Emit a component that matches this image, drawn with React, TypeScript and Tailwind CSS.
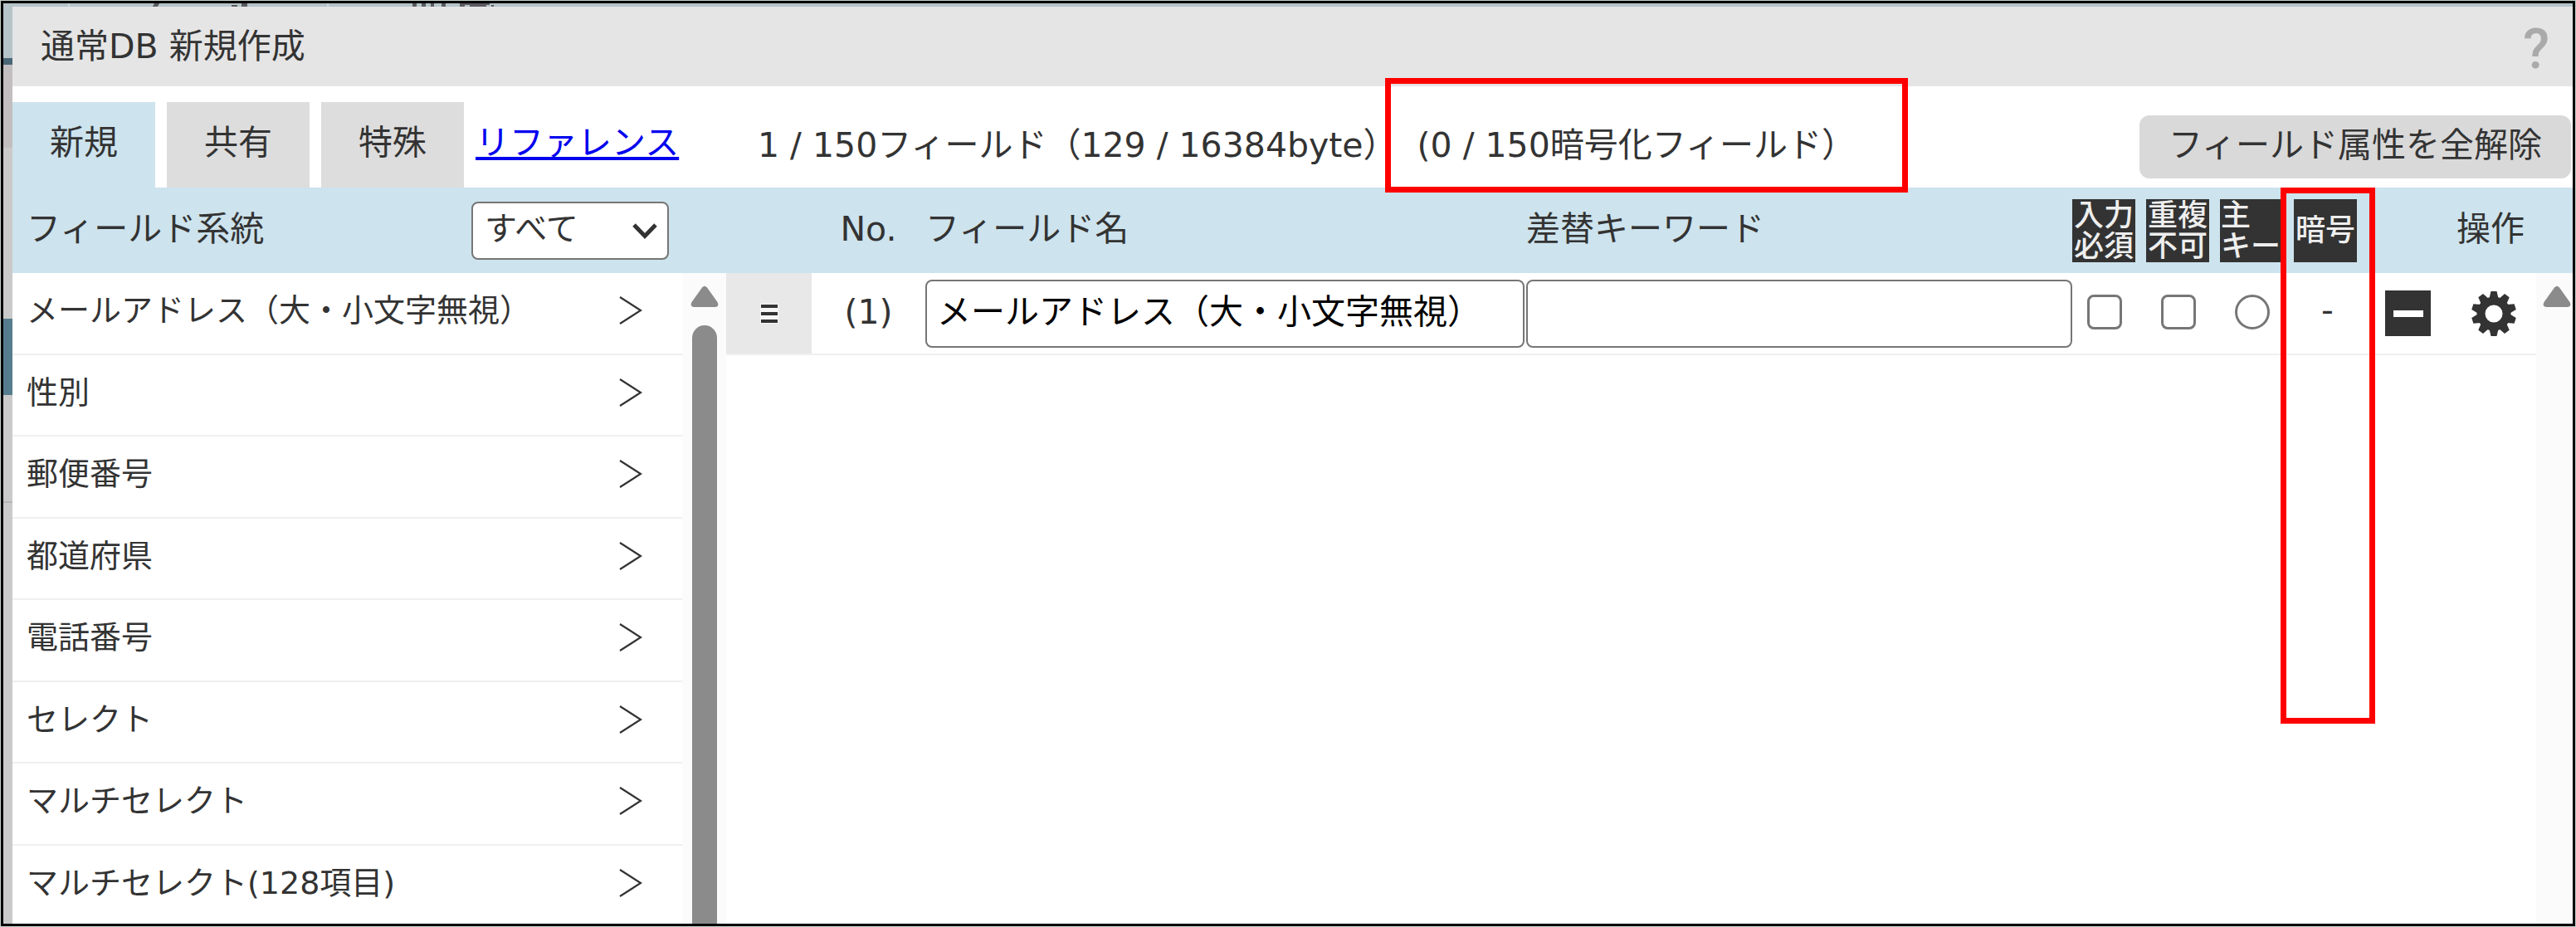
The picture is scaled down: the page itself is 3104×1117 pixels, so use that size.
import { ReactNode } from 'react'
import { clsx } from 'clsx'

interface FieldRow {
  no: number
  name: string
  keyword: string
}

const tabs = ['新規', '共有', '特殊']

const fieldTypes = [
  'メールアドレス（大・小文字無視）',
  '性別',
  '郵便番号',
  '都道府県',
  '電話番号',
  'セレクト',
  'マルチセレクト',
  'マルチセレクト(128項目)',
]

const rows: FieldRow[] = [{ no: 1, name: 'メールアドレス（大・小文字無視）', keyword: '' }]

function ChevronRight() {
  return (
    <svg viewBox="0 0 28 34" className="h-[34px] w-7" fill="none" stroke="#333" strokeWidth="2.2" aria-hidden="true">
      <path d="M1 1 26 17 1 33" />
    </svg>
  )
}

function ArrowUp() {
  return (
    <svg viewBox="0 0 34 26" className="h-[26px] w-[34px] shrink-0" fill="#8b8b8b" aria-hidden="true">
      <path d="M14 2.5Q17-1 20 2.5L32.5 20Q35 25.5 30 26H4Q-1 25.5 1.500 20Z" />
    </svg>
  )
}

function Gear() {
  const teeth = [0, 36, 72, 108, 144, 180, 216, 252, 288, 324]
  return (
    <svg viewBox="0 0 56 56" className="size-14" aria-hidden="true">
      <circle cx="28" cy="28" r="15.500" fill="none" stroke="#333" strokeWidth="10" />
      {teeth.map((deg) => (
        <path key={deg} d="M22.500 9.500 24.500 1H31.500L33.500 9.500Z" fill="#333" transform={`rotate(${deg} 28 28)`} />
      ))}
    </svg>
  )
}

function Badge({ children, left = false }: { children: ReactNode; left?: boolean }) {
  return (
    <span
      className={clsx(
        'flex size-[76px] flex-col justify-center bg-[#333] px-px text-[36px] leading-[37px] font-medium text-[#eee]',
        left ? 'items-start' : 'items-center'
      )}
    >
      {children}
    </span>
  )
}

// Sliver of the page that stays visible behind the dialog
function Backdrop() {
  return (
    <div className="flex w-[11px] shrink-0 flex-col bg-[#cacaca]" aria-hidden="true">
      <div className="h-[62px] bg-[#b5c4c9]" />
      <div className="h-2 bg-[#4a6675]" />
      <div className="h-[100px] bg-[#c2bec0]" />
      <div className="h-[206px]" />
      <div className="h-[92px] bg-[#567d8e]" />
      <div className="h-[130px] border-b-2 border-[#b5b5b5]" />
    </div>
  )
}

function Sidebar() {
  return (
    <aside className="flex w-[860px] shrink-0 flex-col">
      <div className="flex h-[103px] shrink-0 items-center justify-between bg-[#cde3ed] pr-[69px] pl-[17px]">
        <label htmlFor="family" className="pb-1">フィールド系統</label>
        <div className="relative">
          <select
            id="family"
            className="block h-[70px] w-[238px] appearance-none rounded-lg border-2 border-[#767676] bg-white pb-1 pl-3.5 text-[39px] leading-[60px]"
          >
            <option>すべて</option>
          </select>
          <svg
            viewBox="0 0 30 20"
            className="pointer-events-none absolute top-[26px] right-3.5 h-5 w-[30px]"
            fill="none"
            stroke="#333"
            strokeWidth="5"
            aria-hidden="true"
          >
            <path d="M2 2 15 15.500 28 2" />
          </svg>
        </div>
      </div>

      <div className="flex min-h-0 flex-1 overflow-hidden">
        <ul className="grid h-[788px] flex-1 auto-rows-fr text-[38px]">
          {fieldTypes.map((type) => (
            <li key={type} className="border-b-2 border-[#efefef]">
              <button type="button" className="flex h-full w-full items-center justify-between pr-12 pb-1.5 pl-[17px] text-left">
                {type}
                <ChevronRight />
              </button>
            </li>
          ))}
        </ul>
        <div className="flex w-[53px] flex-col items-center gap-[22px] bg-[#fbfbfb] pt-[15px]">
          <ArrowUp />
          <div className="w-[30px] flex-1 rounded-t-full bg-[#8b8b8b]" />
        </div>
      </div>
    </aside>
  )
}

function FieldTable() {
  return (
    <table className="w-full table-fixed border-collapse">
      <thead>
        <tr className="h-[103px] bg-[#cde3ed] text-left">
          <th className="w-[103px]" />
          <th className="w-[137px] pb-1 text-center font-normal">No.</th>
          <th className="w-[724px] pb-1 font-normal">フィールド名</th>
          <th className="pb-1 font-normal">差替キーワード</th>
          <th className="w-[89px]">
            <Badge><span>入力</span><span>必須</span></Badge>
          </th>
          <th className="w-[89px]">
            <Badge><span>重複</span><span>不可</span></Badge>
          </th>
          <th className="w-[89px]">
            <Badge left><span>主</span><span>キー</span></Badge>
          </th>
          <th className="w-[89px]">
            <Badge>暗号</Badge>
          </th>
          <th className="w-[203px] pr-3.5 pb-1 text-right font-normal">操作</th>
        </tr>
      </thead>
      <tbody>
        {rows.map((row) => (
          <tr key={row.no} className="h-[98px] border-b-2 border-[#efefef]">
            <td className="bg-[#e8e8e8]">
              <svg viewBox="0 0 22 24" className="mx-auto h-6 w-[22px]" aria-hidden="true">
                <path d="M0 0h22v24H0z" fill="#f6f6f6" />
                <path d="M1 1h20v4H1zM1 10h20v4H1zM1 19h20v4H1z" fill="#333" />
              </svg>
            </td>
            <td className="pb-1 text-center">({row.no})</td>
            <td>
              <input
                type="text"
                aria-label="フィールド名"
                defaultValue={row.name}
                className="block h-[82px] w-[722px] rounded-lg border-2 border-[#767676] bg-white px-3 pb-3 text-black"
              />
            </td>
            <td>
              <input
                type="text"
                aria-label="差替キーワード"
                defaultValue={row.keyword}
                className="block h-[82px] w-full rounded-lg border-2 border-[#767676] bg-white px-3 pb-3 text-black"
              />
            </td>
            <td className="pr-3 pb-1">
              <input type="checkbox" aria-label="入力必須" className="mx-auto block size-[42px] appearance-none rounded-lg border-[3px] border-[#767676]" />
            </td>
            <td className="pr-3 pb-1">
              <input type="checkbox" aria-label="重複不可" className="mx-auto block size-[42px] appearance-none rounded-lg border-[3px] border-[#767676]" />
            </td>
            <td className="pr-3 pb-1">
              <input type="radio" name="primary" aria-label="主キー" className="mx-auto block size-[42px] appearance-none rounded-full border-[3px] border-[#767676]" />
            </td>
            <td className="pr-2 pb-2 text-center">-</td>
            <td className="pl-[21px]">
              <div className="flex items-center gap-12">
                <button type="button" aria-label="削除" className="flex size-[55px] items-center justify-center bg-[#333]">
                  <span className="h-2 w-9 bg-white" />
                </button>
                <button type="button" aria-label="設定">
                  <Gear />
                </button>
              </div>
            </td>
          </tr>
        ))}
      </tbody>
    </table>
  )
}

export default function App() {
  return (
    <div className="h-screen bg-[#c5d0cb] p-px font-['DejaVu_Sans','Noto_Sans_CJK_JP',sans-serif] text-[41px] leading-[60px] text-[#333]">
      <div className="flex h-full flex-col overflow-hidden border-[3px] border-black bg-white">
        <svg className="h-1 w-full shrink-0 bg-[#b5c4c9]" aria-hidden="true">
          <path d="M79 0v4M391 0v4" stroke="#ccd6da" strokeWidth="2" />
          <path d="M180 4l2-4h6l-2 4zM275 2h7v2h-7zM287 0h7v4h-7zM493 0h5v4h-5zM504 0h5v4h-5zM515 0h4v4h-4zM528 0h5v4h-5zM550 0h6v4h-6zM556 0h30v2h-30zM562 2h20v2h-20zM588 2h3v2h-3z" fill="#5a5a60" />
        </svg>
        <div className="flex min-h-0 flex-1">
          <Backdrop />
          <div className="relative flex min-w-0 flex-1 flex-col">
            <header className="flex h-24 shrink-0 items-center justify-between bg-[#e5e5e5] pr-7 pl-[34px]">
              <h1>通常DB 新規作成</h1>
              <button type="button" aria-label="ヘルプ" className="pt-2 font-['Roboto',sans-serif] text-[66px] font-medium text-[#aaa]">
                ?
              </button>
            </header>

            <div className="flex h-[122px] shrink-0 items-end">
              <div className="flex w-[860px] shrink-0 items-end gap-[14px]">
                {tabs.map((tab, i) => (
                  <button
                    key={tab}
                    type="button"
                    className={clsx('h-[103px] w-[172px] pb-1.5', i === 0 ? 'bg-[#cde3ed]' : 'bg-[#ddd]')}
                  >
                    {tab}
                  </button>
                ))}
                <a href="#" className="flex h-[103px] items-center pb-1.5 text-[#0000ee] underline">リファレンス</a>
              </div>
              <div className="flex h-[103px] flex-1 items-center justify-between pr-0.5 pl-[38px]">
                <p className="flex gap-6">
                  <span>1 / 150フィールド（129 / 16384byte）</span>
                  <span>(0 / 150暗号化フィールド）</span>
                </p>
                <button type="button" className="mt-1 h-[76px] w-[520px] rounded-xl bg-[#d9d9d9] pb-1">
                  フィールド属性を全解除
                </button>
              </div>
            </div>

            <div className="flex min-h-0 flex-1">
              <Sidebar />
              <main className="flex min-w-0 flex-1">
                <div className="min-w-0 flex-1">
                  <FieldTable />
                </div>
                <div className="flex w-11 shrink-0 flex-col bg-[#fbfbfb]">
                  <div className="h-[103px] bg-[#cde3ed]" />
                  <div className="flex justify-end pt-[15px] pr-0.5">
                    <ArrowUp />
                  </div>
                </div>
              </main>
            </div>

            {/* Callouts for the encryption count and column */}
            <div className="pointer-events-none absolute top-[86px] left-[1654px] h-[138px] w-[630px] border-[7px] border-[#ff0000]" />
            <div className="pointer-events-none absolute top-[218px] right-[238px] h-[646px] w-[114px] border-[7px] border-[#ff0000]" />
          </div>
        </div>
      </div>
    </div>
  )
}
